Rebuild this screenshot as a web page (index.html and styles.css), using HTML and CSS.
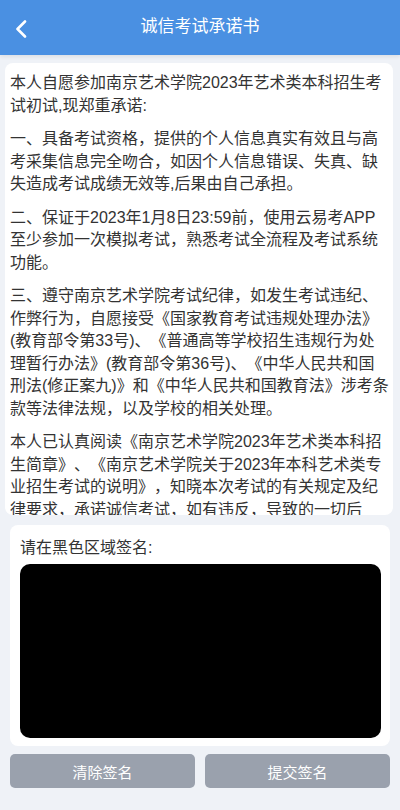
FILE: index.html
```html
<!DOCTYPE html>
<html lang="zh-CN">
<head>
<meta charset="utf-8">
<meta name="viewport" content="width=400">
<title>诚信考试承诺书</title>
<link rel="stylesheet" href="styles.css">
</head>
<body>
<header class="topbar">
  <span class="back" aria-label="返回">
    <svg width="14" height="18" viewBox="0 0 14 18"><path d="M11 1.5 L3.5 9 L11 16.5" fill="none" stroke="#fff" stroke-width="2.6" stroke-linecap="round" stroke-linejoin="round"/></svg>
  </span>
  <h1 class="title">诚信考试承诺书</h1>
</header>
<main class="page">
  <section class="letter">
    <p>本人自愿参加南京艺术学院2023年艺术类本科招生考试初试,现郑重承诺:</p>
    <p>一、具备考试资格，提供的个人信息真实有效且与高考采集信息完全吻合，如因个人信息错误、失真、缺失造成考试成绩无效等,后果由自己承担。</p>
    <p>二、保证于2023年1月8日23:59前，使用云易考APP至少参加一次模拟考试，熟悉考试全流程及考试系统功能。</p>
    <p>三、遵守南京艺术学院考试纪律，如发生考试违纪、作弊行为，自愿接受《国家教育考试违规处理办法》(教育部令第33号)、《普通高等学校招生违规行为处理暂行办法》(教育部令第36号)、《中华人民共和国刑法(修正案九)》和《中华人民共和国教育法》涉考条款等法律法规，以及学校的相关处理。</p>
    <p>本人已认真阅读《南京艺术学院2023年艺术类本科招生简章》、《南京艺术学院关于2023年本科艺术类专业招生考试的说明》，知晓本次考试的有关规定及纪律要求，承诺诚信考试，如有违反，导致的一切后果，由本人承担。</p>
  </section>
  <section class="sign">
    <div class="sign-label">请在黑色区域签名:</div>
    <div class="sign-pad"></div>
  </section>
  <div class="actions">
    <button class="btn">清除签名</button>
    <button class="btn">提交签名</button>
  </div>
</main>
</body>
</html>
```
FILE: styles.css
```css
* { box-sizing: border-box; }
html, body { margin: 0; padding: 0; }
body {
  width: 400px;
  height: 810px;
  overflow: hidden;
  background: #eff2f7;
  font-family: "Liberation Sans", "Noto Sans CJK SC", sans-serif;
  color: #333;
  text-spacing-trim: space-all;
}
.topbar {
  height: 55px;
  background: #4a90e2;
  display: flex;
  align-items: center;
  justify-content: center;
  position: relative;
  box-shadow: 0 2px 4px rgba(0,0,0,0.08);
}
.back {
  position: absolute;
  left: 14px;
  top: 20px;
  display: flex;
}
.title {
  margin: 0;
  font-size: 17px;
  font-weight: 400;
  color: #fff;
  line-height: 24px;
  margin-top: -2px;
}
.page {
  padding: 8px 0 0;
}
.letter {
  margin: 0 7px 0 5px;
  height: 452px;
  overflow: hidden;
  background: #fff;
  border-radius: 8px;
  padding: 9px 3.4px 0 5px;
  font-size: 16px;
  line-height: 22.5px;
}
.letter p {
  margin: 0 0 11px;
}
.sign {
  margin: 10px 10px 0;
  background: #fff;
  border-radius: 8px;
  padding: 12px 9px 8px 10px;
}
.sign-label {
  font-size: 16px;
  line-height: 22px;
  color: #333;
}
.sign-pad {
  margin-top: 5px;
  height: 174px;
  background: #000;
  border-radius: 10px;
}
.actions {
  display: flex;
  gap: 10px;
  padding: 0 10px;
  margin-top: 8px;
}
.btn {
  flex: 1;
  height: 34px;
  border: none;
  border-radius: 5px;
  background: #9aa1ad;
  color: #fff;
  font-family: inherit;
  font-size: 15px;
  padding: 0;
}
```
